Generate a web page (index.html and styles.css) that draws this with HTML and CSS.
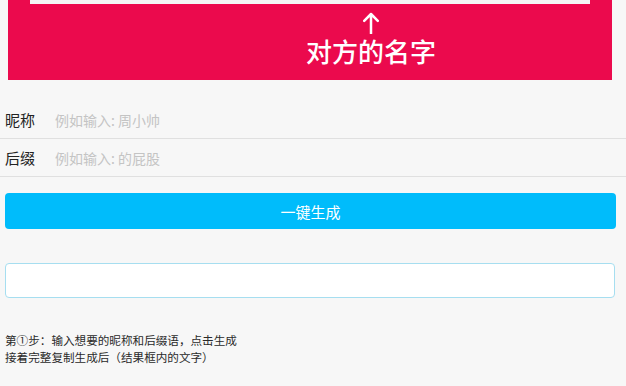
FILE: index.html
```html
<!DOCTYPE html>
<html lang="zh">
<head>
<meta charset="utf-8">
<link rel="stylesheet" href="styles.css">
</head>
<body>
<div class="banner">
  <div class="preview"></div>
  <div class="hint">
    <svg class="arrow" width="16" height="22" viewBox="0 0 16 22"><path d="M8 21.5V2M1.2 8.8L8 2L14.8 8.8" fill="none" stroke="#fff" stroke-width="2.5" stroke-linecap="round" stroke-linejoin="round"/></svg>
    <div class="hint-text">对方的名字</div>
  </div>
</div>
<div class="form">
  <div class="row"><span class="label">昵称</span><span class="placeholder">例如输入: 周小帅</span></div>
  <div class="row"><span class="label">后缀</span><span class="placeholder">例如输入: 的屁股</span></div>
</div>
<div class="btn">一键生成</div>
<div class="result"></div>
<div class="steps">
  <p>第①步：输入想要的昵称和后缀语，点击生成</p>
  <p>接着完整复制生成后（结果框内的文字）</p>
</div>
</body>
</html>
```
FILE: styles.css
```css
html, body {
  margin: 0;
  padding: 0;
}
body {
  background: #f7f7f7;
  font-family: "Noto Sans CJK SC", "Noto Sans", sans-serif;
  color: #333;
  width: 626px;
  height: 386px;
  overflow: hidden;
}
.banner {
  margin: 0 14px 0 8px;
  height: 80px;
  background: #eb0a4d;
  display: flex;
  flex-direction: column;
}
.preview {
  margin: 0 22px;
  height: 4px;
  background: #f4f6f4;
}
.hint {
  display: flex;
  flex-direction: column;
  align-items: center;
  width: 140px;
  margin-left: 293px;
  padding-top: 8px;
}
.arrow {
  display: block;
}
.hint-text {
  color: #fff;
  font-size: 26px;
  line-height: 26px;
  font-weight: 500;
  margin-top: 4px;
}
.form {
  margin-top: 21px;
}
.row {
  height: 37px;
  border-bottom: 1px solid #e0e0e0;
  display: flex;
  align-items: center;
  padding-left: 5px;
}
.label {
  font-size: 15px;
  color: #222;
  width: 50px;
}
.placeholder {
  font-size: 14px;
  color: #c4c4c4;
}
.btn {
  margin: 16px 10px 0 5px;
  height: 36px;
  border-radius: 4px;
  background: #00bcfb;
  color: #fff;
  font-size: 15px;
  display: flex;
  align-items: center;
  justify-content: center;
}
.result {
  margin: 34px 11px 0 5px;
  height: 33px;
  border: 1px solid #a6def0;
  border-radius: 4px;
  background: #fff;
}
.steps {
  margin-top: 34px;
  padding-left: 5px;
  font-size: 11.6px;
  line-height: 17px;
  color: #2a2a2a;
}
.steps p {
  margin: 0;
}
```
